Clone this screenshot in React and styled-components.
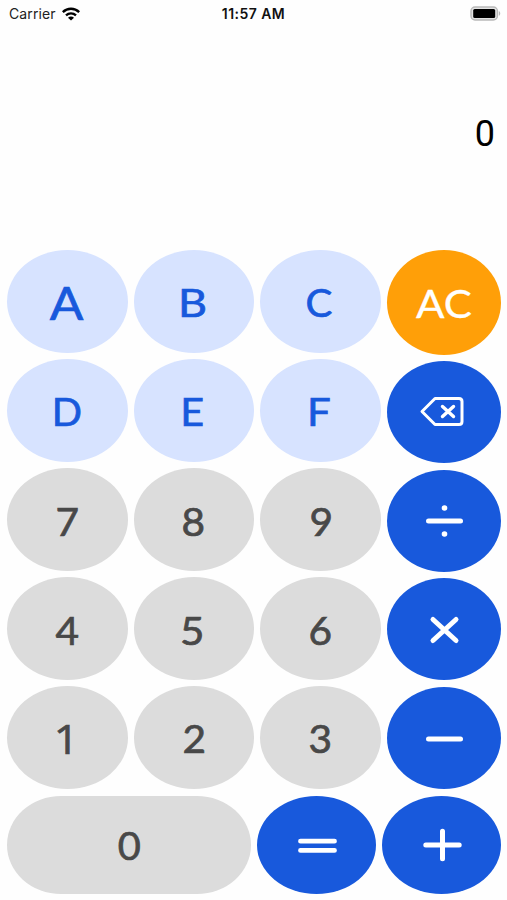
import styled, { createGlobalStyle } from "styled-components";

const GlobalStyle = createGlobalStyle`
    * {
        box-sizing: border-box;
    }
    body {
        margin: 0;
        background: #fefefe;
        font-family: Inter, "Liberation Sans", sans-serif;
    }
`;

const Screen = styled.div`
    width: 507px;
    height: 900px;
    display: flex;
    flex-direction: column;
    overflow: hidden;
`;

const StatusBar = styled.header`
    height: 27px;
    padding: 0 6px 0 9px;
    display: grid;
    grid-template-columns: 1fr auto 1fr;
    align-items: center;
    font-size: 14px;
    color: #222;
`;

const Network = styled.div`
    display: flex;
    align-items: center;
    gap: 6px;
    letter-spacing: 0.1px;
`;

const Clock = styled.div`
    font-weight: 600;
    font-size: 14px;
    letter-spacing: 0.45px;
    margin-right: 3px;
    color: #111;
`;

const Battery = styled.div`
    display: flex;
    justify-content: flex-end;
`;

const Display = styled.div`
    height: 223px;
    padding: 85px 12px 0 0;
    text-align: right;
    font-family: Roboto, sans-serif;
    font-size: 36px;
    line-height: 44px;
    color: #000;
`;

const Keypad = styled.main`
    width: 494px;
    margin-left: 7px;
`;

const UpperKeys = styled.div`
    display: flex;
    gap: 6.5px;
`;

const DigitKeys = styled.div`
    display: grid;
    grid-template-columns: repeat(3, 120.5px);
    grid-auto-rows: 103px;
    gap: 6px;
`;

const ActionKeys = styled.div`
    flex: 1;
    display: grid;
    grid-template-rows: 105px repeat(4, 102px);
    row-gap: 6.4px;
`;

const BottomKeys = styled.div`
    display: grid;
    grid-template-columns: 244px 119px 119px;
    grid-template-rows: 98px;
    justify-content: space-between;
    margin-top: 6.5px;
`;

const tones = {
    hex: { background: "#d7e3ff", color: "#1859dc" },
    digit: { background: "#dcdcdc", color: "#484848" },
    action: { background: "#1859dc", color: "#fff" },
    clear: { background: "#ff9f08", color: "#fff" },
};

const Key = styled.button`
    display: flex;
    align-items: center;
    justify-content: center;
    padding: 0;
    border: none;
    border-radius: ${(props) => (props.$wide ? "54px / 49px" : "50%")};
    background: ${(props) => tones[props.$tone].background};
    color: ${(props) => tones[props.$tone].color};
`;

const Label = styled.span`
    font-family: ${(props) => props.$font || "Lato"}, sans-serif;
    font-size: ${(props) => props.$size || 39}px;
    line-height: 1;
    -webkit-text-stroke: ${(props) => props.$stroke ?? 0.7}px currentColor;
    transform: translate(${(props) => props.$x || 0}px, ${(props) => props.$y || 0}px)
        scaleX(${(props) => props.$stretch || 1});
`;

const Icon = styled.svg`
    width: 48px;
    height: 40px;
    fill: none;
    stroke: currentColor;
    stroke-width: 5;
    stroke-linecap: round;
    stroke-linejoin: round;
    transform: translate(${(props) => props.$x || 0}px, ${(props) => props.$y || 0}px);
`;

const keys = [
    { label: "A", tone: "hex", size: 46, stretch: 1.08, x: -1, y: 1 },
    { label: "B", tone: "hex", stretch: 1.15, x: -1, y: 1 },
    { label: "C", tone: "hex", stretch: 1.03, x: -1, y: 1 },
    { label: "D", tone: "hex", stretch: 1.02, x: 0, y: 1 },
    { label: "E", tone: "hex", stretch: 1.06, x: -1, y: 1 },
    { label: "F", tone: "hex", stretch: 1.08, x: -1, y: 1 },
    { label: "7", tone: "digit", stretch: 1.04, y: 2 },
    { label: "8", tone: "digit", stretch: 1.04, y: 2 },
    { label: "9", tone: "digit", stretch: 1.04, x: 1, y: 2 },
    { label: "4", tone: "digit", stretch: 1.04, y: 2 },
    { label: "5", tone: "digit", stretch: 1.08, x: -1, y: 2 },
    { label: "6", tone: "digit", stretch: 1.04, y: 2 },
    { label: "1", tone: "digit", font: '"Open Sans"', size: 40, stretch: 1.1, x: -1, y: 1 },
    { label: "2", tone: "digit", stretch: 1.04, x: 1, y: 1 },
    { label: "3", tone: "digit", stretch: 1.04, y: 1 },
];

const WifiIcon = () => (
    <svg width="18" height="14" viewBox="0 0 18 14" fill="none" stroke="#000">
        <path d="M0.8 5.1C5.4 0.7 12.6 0.7 17.2 5.1" strokeWidth="2.5" />
        <path d="M4 8.4C6.9 5.6 11.1 5.6 14 8.4" strokeWidth="2.3" />
        <path d="M9 13.6L6 10.7C7.8 9.1 10.2 9.1 12 10.7Z" fill="#000" stroke="none" />
    </svg>
);

const BatteryIcon = () => (
    <svg width="31" height="15" viewBox="0 0 31 15">
        <rect x="1" y="1" width="26.4" height="13" rx="4" fill="#e4e4e4" stroke="#b9b9b9" strokeWidth="1.4" />
        <rect x="3.2" y="3" width="22" height="9" rx="1.5" fill="#000" />
        <path d="M28.8 5C30.7 5.8 30.7 9 28.8 9.8Z" fill="#b9b9b9" />
    </svg>
);

const BackspaceIcon = () => (
    <Icon viewBox="0 0 48 40" $x={-1} $y={-0.5}>
        <path
            d="M16 7H40Q43 7 43 10V30Q43 33 40 33H16L3 20Z"
            strokeWidth="3"
        />
        <path d="M23.5 15L34.5 25M34.5 15L23.5 25" strokeWidth="3.4" />
    </Icon>
);

export default function App() {
    return (
        <>
            <GlobalStyle />
            <Screen>
                <StatusBar>
                    <Network>
                        Carrier
                        <WifiIcon />
                    </Network>
                    <Clock>11:57 AM</Clock>
                    <Battery>
                        <BatteryIcon />
                    </Battery>
                </StatusBar>
                <Display>0</Display>
                <Keypad>
                    <UpperKeys>
                        <DigitKeys>
                            {keys.map((k) => (
                                <Key key={k.label} $tone={k.tone}>
                                    <Label
                                        $font={k.font}
                                        $size={k.size}
                                        $stretch={k.stretch}
                                        $x={k.x}
                                        $y={k.y}
                                    >
                                        {k.label}
                                    </Label>
                                </Key>
                            ))}
                        </DigitKeys>
                        <ActionKeys>
                            <Key $tone="clear">
                                <Label $stroke={0.3} $stretch={1.08} $y={1}>AC</Label>
                            </Key>
                            <Key $tone="action" aria-label="Delete">
                                <BackspaceIcon />
                            </Key>
                            <Key $tone="action" aria-label="Divide">
                                <Icon viewBox="0 0 48 40">
                                    <path d="M8.5 20H40.5" />
                                    <path d="M24.5 7H24.51M24.5 33H24.51" strokeWidth="5.6" />
                                </Icon>
                            </Key>
                            <Key $tone="action" aria-label="Multiply">
                                <Icon viewBox="0 0 48 40">
                                    <path d="M13 10.5L36 31.5M36 10.5L13 31.5" />
                                </Icon>
                            </Key>
                            <Key $tone="action" aria-label="Subtract">
                                <Icon viewBox="0 0 48 40">
                                    <path d="M8.5 21H40.5" />
                                </Icon>
                            </Key>
                        </ActionKeys>
                    </UpperKeys>
                    <BottomKeys>
                        <Key $tone="digit" $wide>
                            <Label $stretch={1.02} $y={1}>0</Label>
                        </Key>
                        <Key $tone="action" aria-label="Equals">
                            <Icon viewBox="0 0 48 40">
                                <path d="M7.5 16.2H41.5M7.5 25.4H41.5" strokeWidth="4.8" />
                            </Icon>
                        </Key>
                        <Key $tone="action" aria-label="Add">
                            <Icon viewBox="0 0 48 40">
                                <path d="M7.8 20H41.2M24.5 6.3V33.7" />
                            </Icon>
                        </Key>
                    </BottomKeys>
                </Keypad>
            </Screen>
        </>
    );
}
